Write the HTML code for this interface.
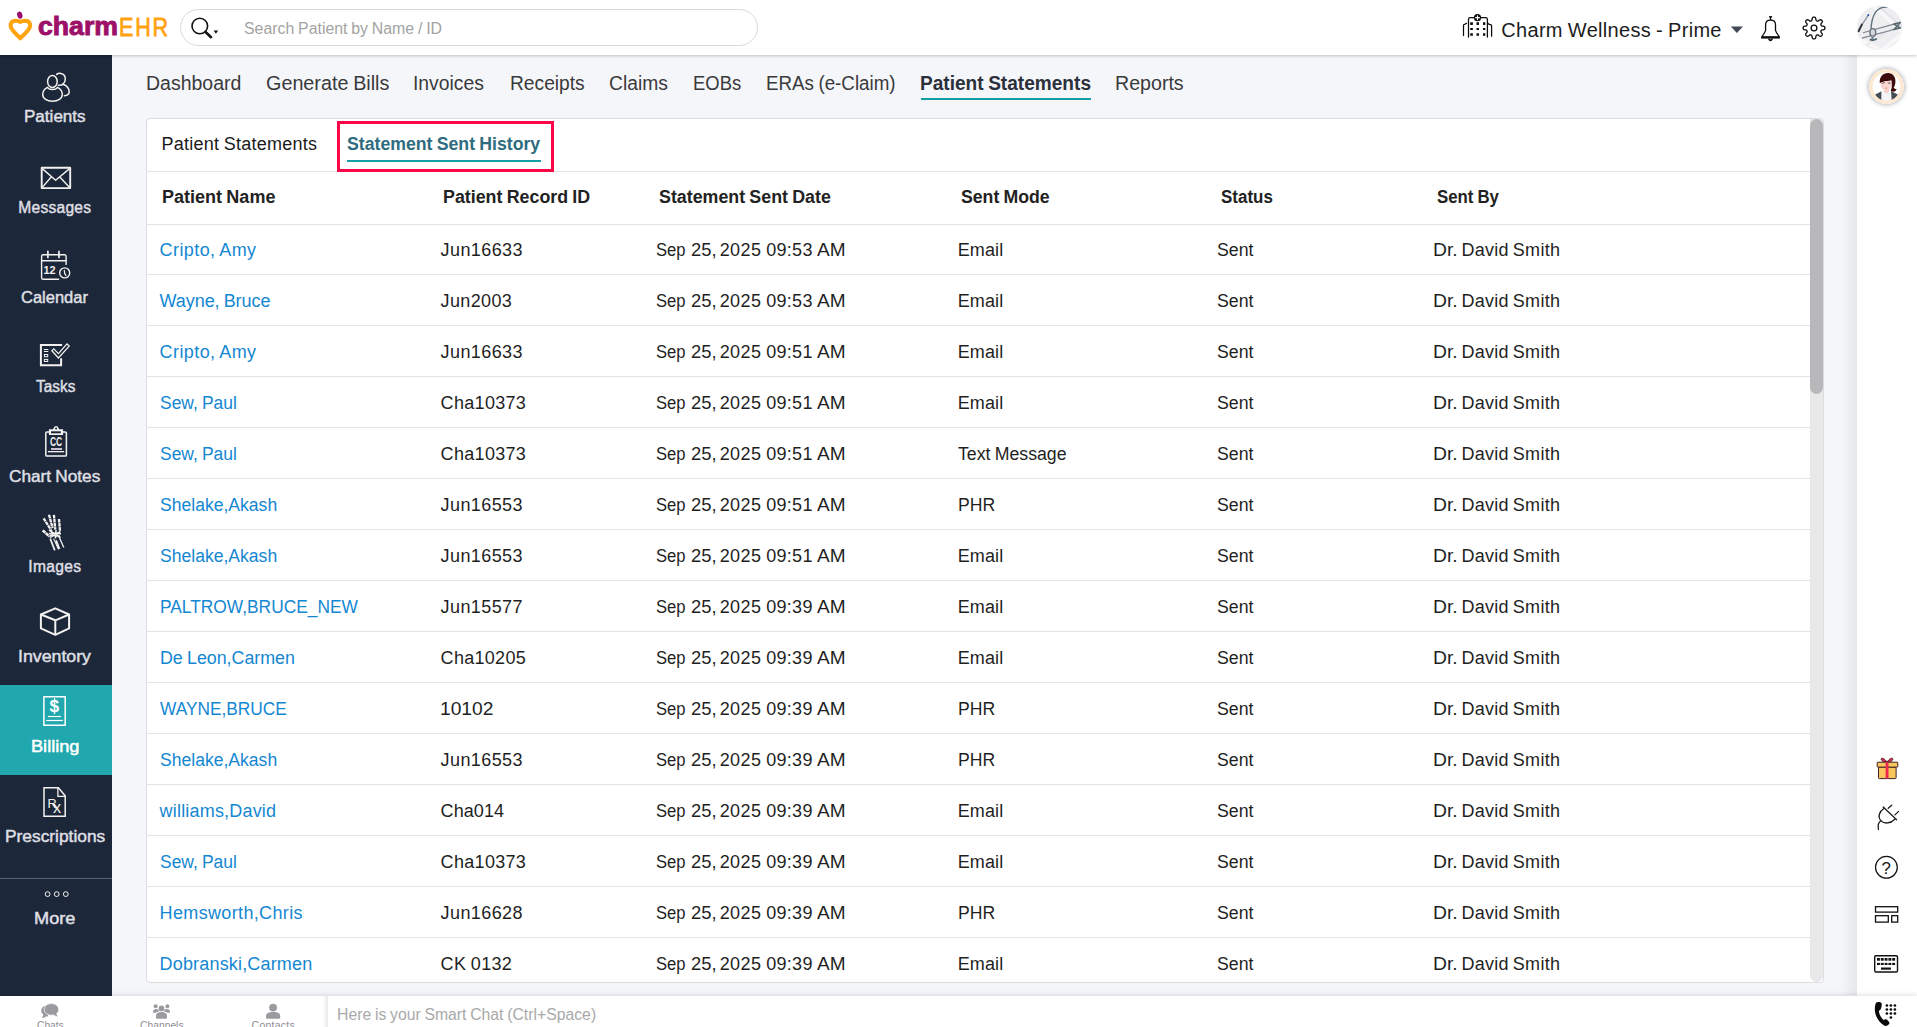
<!DOCTYPE html><html lang="en"><head><meta charset="utf-8"><title>Statement Sent History</title><style>
html,body{margin:0;padding:0;}
html{width:1917px;height:1027px;overflow:hidden;}
body{width:1917px;height:1027px;overflow:hidden;position:relative;background:#f5f6fa;font-family:"Liberation Sans",sans-serif;}
.t{position:absolute;white-space:pre;line-height:1;word-spacing:-0.04em;font-family:"Liberation Sans",sans-serif;}
.t,.p{transform-origin:0 50%;}
.p{display:inline-block;}
.abs{position:absolute;}
#app{position:absolute;left:0;top:0;width:1917px;height:1027px;overflow:hidden;}
#header{left:0;top:0;width:1917px;height:55px;background:#fff;box-shadow:0 1px 3px rgba(0,0,0,0.22);z-index:5;}
#sidebar{left:0;top:55px;width:112px;height:940.500px;background:#1c2739;z-index:3;}
#billing{left:0;top:685px;width:112px;height:90px;background:#20a8ae;z-index:4;}
#sbdiv{left:0;top:878px;width:112px;height:1px;background:#596170;z-index:4;}
#search{left:180px;top:9px;width:576px;height:35px;border:1px solid #d9d9d9;border-radius:19px;background:#fff;}
#card{left:146px;top:118px;width:1676px;height:863px;background:#fff;border:1px solid #dcdde1;border-radius:4px;overflow:hidden;}
.rl{position:absolute;left:0;width:1663px;height:1px;background:#e4e4e6;}
#track{left:1663px;top:0;width:13px;height:863px;background:#e8e8e8;border-radius:0 0 6.500px 6.500px;}
#thumb{left:1663px;top:0;width:13px;height:275px;background:#b8b8ba;border-radius:6.5px;}
#pink{left:337px;top:121px;width:211px;height:45px;border:3px solid #fb0648;}
#navul{left:921px;top:98.400px;width:170px;height:2.100px;background:#12a0a5;}
#subul{left:347px;top:160px;width:194px;height:2px;background:#12a0a5;}
#rshadow{left:1841px;top:55px;width:16px;height:940px;background:linear-gradient(to right,rgba(245,246,250,0),#e6e7ea);}
#rpanel{left:1857px;top:55px;width:60px;height:972px;background:#fff;}
#bottom{left:0;top:995.500px;width:1917px;height:32px;background:#fff;box-shadow:0 -1px 5px rgba(0,0,0,0.13);z-index:2;}
#bdiv{left:323px;top:996px;width:5px;height:31px;background:linear-gradient(to right,#fff,#e9e9ec);z-index:3;}
#av1{left:1857px;top:5.500px;width:44.600px;height:44.600px;border-radius:50%;overflow:hidden;background:#e8eaed;}
#av2{left:1869px;top:69px;width:35px;height:35px;border-radius:50%;overflow:hidden;background:#fff;box-shadow:0 0 4px 1px rgba(90,95,110,0.45);}
</style></head><body><div id="app">
<div class="abs" id="sidebar"></div><div class="abs" id="billing"></div><div class="abs" id="sbdiv"></div>
<div class="abs" id="rshadow"></div><div class="abs" id="rpanel"></div>
<div class="abs" id="card">
<div class="rl" style="top:52px"></div>
<div class="rl" style="top:105px"></div>
<div class="rl" style="top:155px"></div>
<div class="rl" style="top:206px"></div>
<div class="rl" style="top:257px"></div>
<div class="rl" style="top:308px"></div>
<div class="rl" style="top:359px"></div>
<div class="rl" style="top:410px"></div>
<div class="rl" style="top:461px"></div>
<div class="rl" style="top:512px"></div>
<div class="rl" style="top:563px"></div>
<div class="rl" style="top:614px"></div>
<div class="rl" style="top:665px"></div>
<div class="rl" style="top:716px"></div>
<div class="rl" style="top:767px"></div>
<div class="rl" style="top:818px"></div>
<div class="rl" style="top:869px"></div>
<div class="abs" id="track"></div><div class="abs" id="thumb"></div>
</div>
<div class="abs" id="pink"></div><div class="abs" id="navul"></div><div class="abs" id="subul"></div>
<div class="abs" id="bottom"></div><div class="abs" id="bdiv"></div>
<div class="abs" id="header"></div><div class="abs" id="search" style="z-index:6"></div>
<div class="abs" id="av1" style="z-index:7"><svg width="45" height="45" viewBox="0 0 45 45"><rect width="45" height="45" fill="#eeeef0"/><g stroke="#f8f8f9" stroke-width="3.5"><path d="M14 -2 L50 30"/><path d="M-4 30 L40 52"/><path d="M20 48 L50 24"/></g><g stroke="#e1e2e5" stroke-width="1.2"><path d="M24 2 L46 22"/><path d="M8 40 L36 22"/></g><path d="M11.600 8.600 L4.600 19.400" stroke="#8d93a3" stroke-width="1.300"/><path d="M4.800 18.600 L1.600 25.200" stroke="#2f333b" stroke-width="2" stroke-linecap="round"/><path d="M11.700 8.200 L11 10" stroke="#1d3fae" stroke-width="1.500"/><path d="M14 24.500 C14.200 17 15.200 11 18.600 6.200 C21.600 2 25.600 0.800 30.600 1.200" stroke="#587079" stroke-width="1.350" fill="none"/><g stroke="#7c8290" stroke-width="1.100" fill="none"><path d="M6 26.700 L36 18.400"/><path d="M4.900 32.100 L36 23.700"/></g><g stroke="#5d6c73" stroke-width="1.700" fill="none"><path d="M36 18.400 L44 16.200"/><path d="M36 23.700 L44 21.600"/><path d="M37 18 L43 22 M37 23.500 L43 17"/></g><ellipse cx="15.800" cy="26.400" rx="2.900" ry="3.800" fill="#d5d7dc" stroke="#67707e" stroke-width="1.400"/><path d="M12.800 33.400 C15 34.400 18 34 19.800 32.600" stroke="#46616a" stroke-width="1.800" fill="none"/><path d="M15.600 30 V33" stroke="#7d8594" stroke-width="2.400"/></svg></div>
<div class="abs" id="av2" style="z-index:7"><svg width="35" height="35" viewBox="0 0 35 35"><circle cx="17.500" cy="17.500" r="15.700" fill="#fff" stroke="#fde9d2" stroke-width="3.600"/><path d="M6.200 25.400 L12.600 22.200 L12.600 30.800 C10 29.800 7.800 27.900 6.200 25.400 Z" fill="#464c55"/><path d="M22 22.200 L28.800 25.400 C27.200 27.900 25 29.800 22.400 30.800 Z" fill="#464c55"/><path d="M12.600 22.600 L17.300 24.200 L22 22.600 L22.400 30.800 C19.200 32 15.800 32 12.600 30.800 Z" fill="#f4f5f7"/><path d="M14.800 19 H20 V23 L17.400 24.400 L14.800 23 Z" fill="#f7cfcb"/><ellipse cx="17" cy="14.600" rx="5.600" ry="6.400" fill="#f9d6d1"/><path d="M10.800 14.200 C10.200 8 14 4 19 4 C24 4 26.800 8 26.400 13 C26.200 15.400 25.600 17.400 24.600 18.800 C25.800 20 26.800 20.200 27.600 20 C27 22.400 24.600 23.400 21.600 22 C23 19 23.200 15.600 22.400 11.200 C19.600 12.200 14.400 11.600 11.600 13.800 Z" fill="#3c0a0a"/><path d="M13 14.400 l2.600 -0.800 M18.800 13.800 l2.600 0.600" stroke="#3a4a55" stroke-width="0.900"/><path d="M16 19.200 h2.200" stroke="#d8894e" stroke-width="0.800"/></svg></div>

<div id="icons" style="position:absolute;left:0;top:0;z-index:7"><svg style="position:absolute;left:4px;top:6px;" width="36" height="40" viewBox="0 0 36 40" fill="none"><path d="M16.300 16 C14.900 14.900 13 14.750 11.200 14.750 C8.200 14.750 6.600 17 6.600 19.600 C6.600 24.400 12.900 28.400 16.350 32.300 C19.800 28.400 26.100 24.400 26.100 19.600 C26.100 17 24.500 14.750 21.500 14.750 C19.700 14.750 17.700 14.900 16.300 16 Z" stroke="#ffa30f" stroke-width="4.100" stroke-linejoin="round"/><ellipse cx="15.800" cy="9.200" rx="2.600" ry="3.600" fill="#9c0a6c" transform="rotate(-14 15.800 9.200)"/></svg><svg style="position:absolute;left:188px;top:14px;" width="34" height="28" viewBox="0 0 34 28" fill="none"><circle cx="11.8" cy="12" r="7.8" stroke="#111" stroke-width="1.6"/><path d="M17.6 18 L23 23.2" stroke="#111" stroke-width="2.6" stroke-linecap="round"/><path d="M25.6 16.6 h4.6 l-2.3 3.2z" fill="#111"/></svg><svg style="position:absolute;left:1455px;top:6px;" width="45" height="40" viewBox="0 0 45 40" fill="none"><g stroke="#0c0c0c" stroke-width="1.25" stroke-linecap="round" stroke-linejoin="round"><path d="M13.5 31 V13.400 Q13.500 11.700 15.200 11.700 H30.700 Q32.400 11.700 32.400 13.400 V31"/><path d="M8.500 29.600 V19.300 Q8.500 18.300 9.500 18.300 Q10.600 18.200 11.600 17.300"/><path d="M36.600 30.200 V20 Q36.600 18.700 35.300 18.600 Q34 18.500 33.100 17.500"/></g><circle cx="22.500" cy="11.700" r="3.600" fill="#0c0c0c"/><path d="M22.500 9.800 V13.600 M20.600 11.700 H24.400" stroke="#fff" stroke-width="1.200" stroke-linecap="round"/><g fill="#0c0c0c"><rect x="15.2" y="16.2" width="2.7" height="2.7" rx="0.3"/><rect x="15.2" y="22" width="2.7" height="2.1" rx="0.3"/><rect x="15.2" y="27.3" width="2.7" height="2.5" rx="0.3"/><rect x="21.5" y="16.2" width="2.5" height="2.7" rx="0.3"/><rect x="21.5" y="22" width="2.5" height="2.1" rx="0.3"/><rect x="21.5" y="27.3" width="2.5" height="2.5" rx="0.3"/><rect x="28" y="16.2" width="2.3" height="2.7" rx="0.3"/><rect x="28" y="22" width="2.3" height="2.1" rx="0.3"/><rect x="28" y="27.3" width="2.3" height="2.5" rx="0.3"/></g></svg><svg style="position:absolute;left:1730px;top:26px;" width="14" height="8" viewBox="0 0 14 8" fill="none"><path d="M0.8 0.4 H13 L6.9 7 Z" fill="#444a55"/></svg><svg style="position:absolute;left:1750px;top:6px;" width="40" height="40" viewBox="0 0 40 40" fill="none"><g stroke="#0c0c0c" stroke-width="1.300" stroke-linejoin="round" stroke-linecap="butt"><path d="M19 10.800 H22.100" stroke-width="1.400"/><path d="M20.550 11 V14"/><path d="M11.700 31 C13.400 28.400 15 26.400 15.600 24.400 V18.800 C15.600 15.800 17.600 14.200 20.550 14.200 C23.500 14.200 25.500 15.800 25.500 18.800 V24.400 C26.100 26.400 27.700 28.400 29.400 31 Z"/><path d="M11.200 31.650 H29.900" stroke-width="1.900"/><path d="M18.700 32.600 Q20.500 36.200 22.300 32.600" stroke-width="1.600"/></g></svg><svg style="position:absolute;left:1794.05px;top:7.85px;" width="40" height="40" viewBox="0 0 40 40" fill="none"><path d="M20.00 9.10 L20.43 9.13 L20.85 9.22 L21.25 9.46 L21.58 9.99 L21.80 10.93 L21.95 11.86 L22.14 12.41 L22.38 12.69 L22.64 12.85 L22.91 12.98 L23.19 13.08 L23.49 13.15 L23.85 13.12 L24.37 12.86 L25.14 12.31 L25.95 11.80 L26.57 11.66 L27.02 11.78 L27.39 12.01 L27.71 12.29 L27.99 12.61 L28.22 12.98 L28.34 13.43 L28.20 14.05 L27.69 14.86 L27.14 15.63 L26.88 16.15 L26.85 16.51 L26.92 16.81 L27.02 17.09 L27.15 17.36 L27.31 17.62 L27.59 17.86 L28.14 18.05 L29.07 18.20 L30.01 18.42 L30.54 18.75 L30.78 19.15 L30.87 19.57 L30.90 20.00 L30.87 20.43 L30.78 20.85 L30.54 21.25 L30.01 21.58 L29.07 21.80 L28.14 21.95 L27.59 22.14 L27.31 22.38 L27.15 22.64 L27.02 22.91 L26.92 23.19 L26.85 23.49 L26.88 23.85 L27.14 24.37 L27.69 25.14 L28.20 25.95 L28.34 26.57 L28.22 27.02 L27.99 27.39 L27.71 27.71 L27.39 27.99 L27.02 28.22 L26.57 28.34 L25.95 28.20 L25.14 27.69 L24.37 27.14 L23.85 26.88 L23.49 26.85 L23.19 26.92 L22.91 27.02 L22.64 27.15 L22.38 27.31 L22.14 27.59 L21.95 28.14 L21.80 29.07 L21.58 30.01 L21.25 30.54 L20.85 30.78 L20.43 30.87 L20.00 30.90 L19.57 30.87 L19.15 30.78 L18.75 30.54 L18.42 30.01 L18.20 29.07 L18.05 28.14 L17.86 27.59 L17.62 27.31 L17.36 27.15 L17.09 27.02 L16.81 26.92 L16.51 26.85 L16.15 26.88 L15.63 27.14 L14.86 27.69 L14.05 28.20 L13.43 28.34 L12.98 28.22 L12.61 27.99 L12.29 27.71 L12.01 27.39 L11.78 27.02 L11.66 26.57 L11.80 25.95 L12.31 25.14 L12.86 24.37 L13.12 23.85 L13.15 23.49 L13.08 23.19 L12.98 22.91 L12.85 22.64 L12.69 22.38 L12.41 22.14 L11.86 21.95 L10.93 21.80 L9.99 21.58 L9.46 21.25 L9.22 20.85 L9.13 20.43 L9.10 20.00 L9.13 19.57 L9.22 19.15 L9.46 18.75 L9.99 18.42 L10.93 18.20 L11.86 18.05 L12.41 17.86 L12.69 17.62 L12.85 17.36 L12.98 17.09 L13.08 16.81 L13.15 16.51 L13.12 16.15 L12.86 15.63 L12.31 14.86 L11.80 14.05 L11.66 13.43 L11.78 12.98 L12.01 12.61 L12.29 12.29 L12.61 12.01 L12.98 11.78 L13.43 11.66 L14.05 11.80 L14.86 12.31 L15.63 12.86 L16.15 13.12 L16.51 13.15 L16.81 13.08 L17.09 12.98 L17.36 12.85 L17.62 12.69 L17.86 12.41 L18.05 11.86 L18.20 10.93 L18.42 9.99 L18.75 9.46 L19.15 9.22 L19.57 9.13Z" stroke="#0c0c0c" stroke-width="1.300" stroke-linejoin="round"/><circle cx="20" cy="20" r="2.900" stroke="#0c0c0c" stroke-width="1.250"/></svg><svg style="position:absolute;left:30px;top:66px;" width="52" height="40" viewBox="0 0 52 40" fill="none"><g stroke="#f3f2f0" stroke-width="1.5" stroke-linecap="round" stroke-linejoin="round"><ellipse cx="22.4" cy="15.5" rx="4.8" ry="6"/><path d="M17.4 21.4 C14.4 23 12.7 25.6 12.7 28.6 C12.7 32.6 17 35.3 22.5 35.3 C28 35.3 32.3 32.6 32.3 28.6 C32.3 25.6 30.6 23 27.6 21.4 C25.6 24.3 19.4 24.3 17.4 21.4 Z"/><path d="M26.6 8.4 C28 7.3 29.4 7.2 30.8 7.4 C33.6 7.8 35.3 10.2 35.3 13 C35.3 15.2 34.4 17 32.9 18.2"/><path d="M28.3 19.2 C30.2 19.6 32 19.2 33.2 18.2 C36.8 19.8 39.2 22.6 39.2 25.8 C39.2 28.4 37 29.6 34.4 29.8"/></g></svg><svg style="position:absolute;left:30px;top:156px;" width="52" height="40" viewBox="0 0 52 40" fill="none"><g stroke="#f3f2f0" stroke-linejoin="round"><rect x="11.7" y="11.8" width="28.5" height="20.3" stroke-width="1.9"/><path d="M12.3 12.6 L25.6 24.2 L39.6 12.6 M12.3 31.4 L21.2 21 M39.6 31.4 L29.8 21" stroke-width="1.4"/></g></svg><svg style="position:absolute;left:30px;top:244px;" width="52" height="40" viewBox="0 0 52 40" fill="none"><g stroke="#f3f2f0" stroke-width="1.4" stroke-linecap="round" stroke-linejoin="round"><path d="M28.6 35.3 H13.2 Q11.6 35.3 11.6 33.7 V12.4 Q11.6 10.8 13.2 10.8 H34.5 Q36.1 10.8 36.1 12.4 V20.4"/><path d="M11.6 16.7 H36.1"/><path d="M17.9 7.4 V13.4 M29 7.4 V13.4" stroke-width="1.700"/><circle cx="34.7" cy="28.9" r="5"/><path d="M34.3 26.3 L34.7 29.6 L35.9 31.4" stroke-width="1.2"/></g><text x="13.6" y="30" font-family="Liberation Sans, sans-serif" font-weight="700" font-size="11.2" fill="#f3f2f0" textLength="12" lengthAdjust="spacingAndGlyphs">12</text></svg><svg style="position:absolute;left:30px;top:334px;" width="52" height="40" viewBox="0 0 52 40" fill="none"><g stroke="#f3f2f0" stroke-linejoin="miter"><path d="M32.1 10.9 H10.9 V31.3 H31.1 V24.2" stroke-width="2"/><rect x="14.4" y="15.5" width="3.3" height="2" stroke-width="1"/><rect x="14.4" y="20.5" width="3.3" height="2.2" stroke-width="1"/><rect x="14.4" y="25.4" width="3.3" height="2.1" stroke-width="1"/><path d="M21.9 16.8 L23.8 14.9 L28.4 19.6 L37 9.9 L39.2 12.1 L28.4 24 Z" stroke-width="1.3"/></g></svg><svg style="position:absolute;left:30px;top:420px;" width="52" height="40" viewBox="0 0 52 40" fill="none"><g stroke="#f3f2f0" stroke-linejoin="round"><rect x="15.8" y="11.9" width="20.6" height="24.2" rx="1.2" stroke-width="1.5"/></g><path d="M18.9 15 V9.2 H23 L24.6 6.6 Q26.1 5.2 27.6 6.6 L29.2 9.2 H33.1 V15 Z" fill="#f3f2f0"/><rect x="21" y="11.3" width="9.8" height="2" fill="#1c2739"/><circle cx="26.1" cy="8.6" r="1" fill="#1c2739"/><text x="19.9" y="25.9" font-family="Liberation Sans, sans-serif" font-weight="700" font-size="12.2" fill="#f3f2f0" textLength="12.3" lengthAdjust="spacingAndGlyphs">CC</text><rect x="21" y="28" width="11.1" height="2" fill="#c9c3cf"/><rect x="17.9" y="31" width="16.2" height="1.3" fill="#f3f2f0"/></svg><svg style="position:absolute;left:30px;top:510px;" width="52" height="46" viewBox="0 0 52 46" fill="none"><g stroke="#f3f2f0" stroke-width="2.300" stroke-linecap="butt" stroke-dasharray="3.600 0.500"><path d="M13.600 8.400 L20.800 19.400"/><path d="M19 4.800 L22.600 18"/><path d="M23.900 4.800 L25.300 19.600"/><path d="M29 9 L30 21"/><path d="M12.700 20.400 L19.600 26.600" stroke-width="2.600"/></g><g stroke="#f3f2f0" stroke-width="1.500"><path d="M19 20 L30.500 27.500 M30.500 21.500 L20 27.500 M21.500 19.500 L22.500 26.500 M26 20 L25.500 28.500 M19 23.500 L31 23.800 M20 25.500 L30 26"/></g><g stroke="#f3f2f0" stroke-width="1.700"><path d="M20.200 28.600 L24.800 40.400"/><path d="M26 30.400 L29.400 39" stroke-width="2"/><path d="M28.800 26.200 L33.800 37.600" stroke-width="1.300"/><path d="M23.600 28.600 L28.400 39.400" stroke-width="1.100"/></g></svg><svg style="position:absolute;left:30px;top:600px;" width="52" height="40" viewBox="0 0 52 40" fill="none"><g stroke="#f3f2f0" stroke-width="2" stroke-linejoin="round"><path d="M25.3 8.3 L39.1 14.5 V28.4 L25.3 34.8 L10.9 28.4 V14.5 Z"/><path d="M10.9 14.5 L25.3 20.3 L39.1 14.5 M25.3 20.3 V34.8"/></g></svg><svg style="position:absolute;left:30px;top:688px;" width="52" height="40" viewBox="0 0 52 40" fill="none"><g stroke="#fff"><rect x="13.9" y="8.650" width="21.3" height="28.5" stroke-width="1.500" stroke-linejoin="round"/><path d="M24.550 10.200 V25.800" stroke-width="1.300"/></g><text x="19.6" y="24.2" font-family="Liberation Sans, sans-serif" font-weight="700" font-size="16.5" fill="#fff" textLength="9.6" lengthAdjust="spacingAndGlyphs">$</text><rect x="17.9" y="27.9" width="13.1" height="1.2" fill="#fff"/><rect x="16.2" y="31.9" width="16.7" height="1.2" fill="#fff"/></svg><svg style="position:absolute;left:30px;top:780px;" width="52" height="40" viewBox="0 0 52 40" fill="none"><g stroke="#f3f2f0" stroke-width="1.5" stroke-linejoin="miter"><path d="M28.4 7.7 H14 V36.2 H35.2 V15.8 Z"/><path d="M27.9 7.9 V16.3 H35" stroke-width="1.3"/><path d="M22.600 24.300 L26.500 28.600" stroke-width="1.250"/></g><text x="17.4" y="27.9" font-family="Liberation Sans, sans-serif" font-size="12.6" fill="#f3f2f0">R</text><text x="22.900" y="33.400" font-family="Liberation Sans, sans-serif" font-size="16.200" fill="#f3f2f0">x</text></svg><svg style="position:absolute;left:40px;top:886px;" width="36" height="16" viewBox="0 0 36 16" fill="none"><g stroke="#f3f2f0" stroke-width="1"><circle cx="7.6" cy="8.1" r="2.4"/><circle cx="16.7" cy="8.1" r="2.4"/><circle cx="25.8" cy="8.1" r="2.4"/></g></svg><svg style="position:absolute;left:1860px;top:750px;" width="52" height="40" viewBox="0 0 52 40" fill="none"><g stroke="#3c1f24" stroke-width="1" stroke-linejoin="round"><path d="M27 12.2 C25 9 22.4 7.6 21.4 8.6 C20.4 9.8 22.4 11.8 27 12.4 C31.600 11.8 33.600 9.8 32.600 8.600 C31.600 7.600 29 9 27 12.200 Z" fill="#f0284f"/><rect x="18.5" y="17" width="17.6" height="11.6" rx="0.8" fill="#fbc55e"/><rect x="17.2" y="12.2" width="20.6" height="4.9" rx="0.6" fill="#fbc55e"/></g><rect x="25.6" y="12.2" width="2.9" height="16.4" fill="#f0284f"/></svg><svg style="position:absolute;left:1860px;top:800px;" width="52" height="40" viewBox="0 0 52 40" fill="none"><g stroke="#1e1e1e" stroke-width="1.3" stroke-linecap="round"><path d="M23.2 7 L36.6 19.700"/><path d="M28.2 8.300 L31.700 5.200 M34.900 14.900 L38.600 11.400"/><path d="M24.200 8.2 C19 11.5 17.600 17 20.800 20.600 C24.200 24.200 30.500 23.800 34.800 19.200"/><path d="M20.900 20.800 C18.600 22.200 17.600 24.600 18.400 29.300"/></g></svg><svg style="position:absolute;left:1860px;top:845px;" width="52" height="40" viewBox="0 0 52 40" fill="none"><circle cx="26.4" cy="22.3" r="10.9" stroke="#111" stroke-width="1.2"/><text x="21.6" y="28.9" font-family="Liberation Sans, sans-serif" font-size="16.8" fill="#111">?</text></svg><svg style="position:absolute;left:1860px;top:895px;" width="52" height="40" viewBox="0 0 52 40" fill="none"><g stroke="#111" stroke-width="1.3"><rect x="15.5" y="11.700" width="22.2" height="5.400"/><rect x="15.5" y="20.700" width="12.8" height="6.400"/><rect x="31.700" y="20.700" width="6" height="6.400"/></g></svg><svg style="position:absolute;left:1860px;top:940px;" width="52" height="40" viewBox="0 0 52 40" fill="none"><rect x="14.700" y="15.800" width="22.800" height="16.200" rx="1.2" stroke="#111" stroke-width="1.4"/><rect x="17.0" y="18" width="2.900" height="2.700" fill="#111"/><rect x="17.0" y="22.900" width="2.900" height="2.100" fill="#111"/><rect x="20.8" y="18" width="2.900" height="2.700" fill="#111"/><rect x="20.8" y="22.900" width="2.900" height="2.100" fill="#111"/><rect x="24.6" y="18" width="2.900" height="2.700" fill="#111"/><rect x="24.6" y="22.900" width="2.900" height="2.100" fill="#111"/><rect x="28.4" y="18" width="2.900" height="2.700" fill="#111"/><rect x="28.4" y="22.900" width="2.900" height="2.100" fill="#111"/><rect x="32.2" y="18" width="2.900" height="2.700" fill="#111"/><rect x="32.2" y="22.900" width="2.900" height="2.100" fill="#111"/><rect x="21" y="27.500" width="9.900" height="2.200" fill="#111"/></svg><svg style="position:absolute;left:1860px;top:995px;" width="52" height="32" viewBox="0 0 52 32" fill="none"><path d="M16.200 7.600 C17.600 6.600 20.600 7 21.700 8.200 C21.900 10.600 21.400 13 20.400 14.700 C19.400 15.300 18.900 15.800 18.900 16.600 C19.400 20 21.400 23.200 23.600 24.900 C24.600 24.300 25.600 23.900 26.400 24.300 C28 25.400 29.100 26.800 29.600 28.300 C28.600 30.300 26.400 31.300 24.600 30.800 C19.600 28.300 15.600 22.300 14.900 15.800 C14.700 12.300 15.100 9.600 16.200 7.600 Z" fill="#0a0a0a"/><circle cx="26.9" cy="10.5" r="1.350" fill="#0a0a0a"/><circle cx="30.9" cy="10.5" r="1.350" fill="#0a0a0a"/><circle cx="34.9" cy="10.5" r="1.350" fill="#0a0a0a"/><circle cx="26.9" cy="14.5" r="1.350" fill="#0a0a0a"/><circle cx="30.9" cy="14.5" r="1.350" fill="#0a0a0a"/><circle cx="34.9" cy="14.5" r="1.350" fill="#0a0a0a"/><circle cx="26.9" cy="18.5" r="1.350" fill="#0a0a0a"/><circle cx="30.9" cy="18.5" r="1.350" fill="#0a0a0a"/><circle cx="34.9" cy="18.5" r="1.350" fill="#0a0a0a"/><circle cx="30.900" cy="22.500" r="1.350" fill="#0a0a0a"/></svg><svg style="position:absolute;left:38px;top:1001px;" width="24" height="20" viewBox="0 0 24 20" fill="none"><path d="M9 4.200 C5.500 4.600 3.200 7 3.200 9.600 C3.200 11.200 4 12.600 5.300 13.600 C5.200 14.900 4.600 16 3.800 16.900 C5.600 16.800 7.200 16.200 8.400 15.200 C9 15.300 9.600 15.400 10.200 15.400" fill="#9b9a9f"/><path d="M13.400 2.600 C9.400 2.600 6.200 5.200 6.200 8.400 C6.200 11.600 9.400 14.200 13.400 14.200 C14.200 14.200 15 14.100 15.700 13.900 C16.800 15 18.400 15.700 20.200 15.800 C19.400 14.800 18.900 13.700 18.800 12.400 C20 11.300 20.700 9.900 20.700 8.400 C20.700 5.200 17.400 2.600 13.400 2.600 Z" fill="#9b9a9f" stroke="#fff" stroke-width="0.700"/></svg><svg style="position:absolute;left:150px;top:1001px;" width="24" height="20" viewBox="0 0 24 20" fill="none"><g fill="#9b9a9f"><circle cx="11.500" cy="7.400" r="2.900"/><path d="M6 16.400 V14.600 C6 12.400 8 11 11.500 11 C15 11 17 12.400 17 14.600 V16.400 Q17 17.700 15.700 17.700 H7.300 Q6 17.700 6 16.400 Z"/><circle cx="5.600" cy="5.200" r="2"/><circle cx="17.400" cy="5.200" r="2"/><path d="M3 11.800 V10.400 C3 8.900 4.200 8 6.200 8 C7.200 8 7.900 8.200 8.300 8.500 C8.500 9.500 8.900 10 9.300 10.400 C7.300 10.700 6 11.200 5.400 11.800 Z"/><path d="M20 11.800 V10.400 C20 8.900 18.800 8 16.800 8 C15.800 8 15.100 8.200 14.700 8.500 C14.500 9.500 14.100 10 13.700 10.400 C15.700 10.700 17 11.200 17.600 11.800 Z"/></g></svg><svg style="position:absolute;left:261px;top:1001px;" width="24" height="20" viewBox="0 0 24 20" fill="none"><g fill="#9b9a9f"><circle cx="12.100" cy="6.600" r="3.900"/><path d="M5 16.200 V14.800 C5 12.400 7.600 11 12.100 11 C16.600 11 19.200 12.400 19.200 14.800 V16.200 Q19.200 17.700 17.700 17.700 H6.500 Q5 17.700 5 16.200 Z"/></g></svg></div>
<div id="texts" style="position:absolute;left:0;top:0;z-index:8">
<span class="t" id="t0" style="left:145.62px;top:73.07px;font-size:20px;font-weight:400;color:#3a3a3a;transform:scaleX(0.9745);">Dashboard</span>
<span class="t" id="t1" style="left:265.51px;top:73.07px;font-size:20px;font-weight:400;color:#3a3a3a;transform:scaleX(0.9886);">Generate Bills</span>
<span class="t" id="t2" style="left:413.43px;top:73.07px;font-size:20px;font-weight:400;color:#3a3a3a;transform:scaleX(0.9667);">Invoices</span>
<span class="t" id="t3" style="left:510.34px;top:73.07px;font-size:20px;font-weight:400;color:#3a3a3a;transform:scaleX(0.9598);">Receipts</span>
<span class="t" id="t4" style="left:608.64px;top:73.07px;font-size:20px;font-weight:400;color:#3a3a3a;transform:scaleX(0.9633);">Claims</span>
<span class="t" id="t5" style="left:693.08px;top:73.07px;font-size:20px;font-weight:400;color:#3a3a3a;transform:scaleX(0.9216);">EOBs</span>
<span class="t" id="t6" style="left:765.66px;top:73.07px;font-size:20px;font-weight:400;color:#3a3a3a;transform:scaleX(0.9382);">ERAs (e-Claim)</span>
<span class="t" id="t7" style="left:1115.47px;top:73.07px;font-size:20px;font-weight:400;color:#3a3a3a;transform:scaleX(0.9804);">Reports</span>
<span class="t" id="t8" style="left:920.35px;top:73.07px;font-size:20px;font-weight:700;color:#2b303b;transform:scaleX(0.9539);">Patient Statements</span>
<span class="t" id="t9" style="left:161.50px;top:134.56px;font-size:18px;font-weight:400;color:#1a1a1a;letter-spacing:0.241px;">Patient Statements</span>
<span class="t" id="t10" style="left:346.60px;top:134.56px;font-size:18px;font-weight:700;color:#2f6c80;transform:scaleX(0.9827);">Statement Sent History</span>
<span class="t" id="t11" style="left:162.00px;top:188.06px;font-size:18px;font-weight:700;color:#222;letter-spacing:0.009px;">Patient Name</span>
<span class="t" id="t12" style="left:442.51px;top:188.06px;font-size:18px;font-weight:700;color:#222;transform:scaleX(0.9905);">Patient Record ID</span>
<span class="t" id="t13" style="left:659.30px;top:188.06px;font-size:18px;font-weight:700;color:#222;transform:scaleX(0.9896);">Statement Sent Date</span>
<span class="t" id="t14" style="left:961.40px;top:188.06px;font-size:18px;font-weight:700;color:#222;transform:scaleX(0.9822);">Sent Mode</span>
<span class="t" id="t15" style="left:1220.50px;top:188.06px;font-size:18px;font-weight:700;color:#222;transform:scaleX(0.9418);">Status</span>
<span class="t" id="t16" style="left:1436.50px;top:188.06px;font-size:18px;font-weight:700;color:#222;transform:scaleX(0.9333);">Sent By</span>
<span class="t" id="t17" style="left:159.60px;top:240.96px;font-size:18px;font-weight:400;color:#1487d2;letter-spacing:0.415px;">Cripto, Amy</span>
<span class="t" id="t18" style="left:440.62px;top:240.96px;font-size:18px;font-weight:400;color:#1f1f1f;letter-spacing:0.407px;">Jun16633</span>
<span class="t" style="left:655.68px;top:240.96px;font-size:18px;font-weight:400;color:#1f1f1f;"><span class="p" id="t19" style="transform:scaleX(0.9240);">Sep </span><span class="p" id="t20" style="transform:scaleX(1.0229);margin-left:-1.49px;">25, </span><span class="p" id="t21" style="letter-spacing:0.400px;margin-left:-0.11px;">2025 </span><span class="p" id="t22" style="letter-spacing:0.312px;margin-left:0.11px;">09:53 </span><span class="p" id="t23" style="transform:scaleX(1.0574);margin-left:0.15px;">AM</span></span>
<span class="t" id="t24" style="left:957.72px;top:240.96px;font-size:18px;font-weight:400;color:#1f1f1f;letter-spacing:0.125px;">Email</span>
<span class="t" id="t25" style="left:1217.39px;top:240.96px;font-size:18px;font-weight:400;color:#1f1f1f;transform:scaleX(0.9847);">Sent</span>
<span class="t" style="left:1433.47px;top:240.96px;font-size:18px;font-weight:400;color:#1f1f1f;"><span class="p" id="t26" style="transform:scaleX(1.0733);">Dr. </span><span class="p" id="t27" style="letter-spacing:0.250px;margin-left:0.85px;">David </span><span class="p" id="t28" style="letter-spacing:0.287px;margin-left:-0.61px;">Smith</span></span>
<span class="t" id="t29" style="left:159.60px;top:291.96px;font-size:18px;font-weight:400;color:#1487d2;letter-spacing:-0.077px;">Wayne, Bruce</span>
<span class="t" id="t30" style="left:440.62px;top:291.96px;font-size:18px;font-weight:400;color:#1f1f1f;letter-spacing:0.367px;">Jun2003</span>
<span class="t" style="left:655.68px;top:291.96px;font-size:18px;font-weight:400;color:#1f1f1f;"><span class="p" id="t31" style="transform:scaleX(0.9240);">Sep </span><span class="p" id="t32" style="transform:scaleX(1.0229);margin-left:-1.49px;">25, </span><span class="p" id="t33" style="letter-spacing:0.400px;margin-left:-0.11px;">2025 </span><span class="p" id="t34" style="letter-spacing:0.312px;margin-left:0.11px;">09:53 </span><span class="p" id="t35" style="transform:scaleX(1.0574);margin-left:0.15px;">AM</span></span>
<span class="t" id="t36" style="left:957.72px;top:291.96px;font-size:18px;font-weight:400;color:#1f1f1f;letter-spacing:0.125px;">Email</span>
<span class="t" id="t37" style="left:1217.39px;top:291.96px;font-size:18px;font-weight:400;color:#1f1f1f;transform:scaleX(0.9847);">Sent</span>
<span class="t" style="left:1433.47px;top:291.96px;font-size:18px;font-weight:400;color:#1f1f1f;"><span class="p" id="t38" style="transform:scaleX(1.0733);">Dr. </span><span class="p" id="t39" style="letter-spacing:0.250px;margin-left:0.85px;">David </span><span class="p" id="t40" style="letter-spacing:0.287px;margin-left:-0.61px;">Smith</span></span>
<span class="t" id="t41" style="left:159.60px;top:342.96px;font-size:18px;font-weight:400;color:#1487d2;letter-spacing:0.415px;">Cripto, Amy</span>
<span class="t" id="t42" style="left:440.62px;top:342.96px;font-size:18px;font-weight:400;color:#1f1f1f;letter-spacing:0.407px;">Jun16633</span>
<span class="t" style="left:655.68px;top:342.96px;font-size:18px;font-weight:400;color:#1f1f1f;"><span class="p" id="t43" style="transform:scaleX(0.9240);">Sep </span><span class="p" id="t44" style="transform:scaleX(1.0229);margin-left:-1.49px;">25, </span><span class="p" id="t45" style="letter-spacing:0.400px;margin-left:-0.11px;">2025 </span><span class="p" id="t46" style="letter-spacing:0.312px;margin-left:0.11px;">09:51 </span><span class="p" id="t47" style="transform:scaleX(1.0574);margin-left:0.15px;">AM</span></span>
<span class="t" id="t48" style="left:957.72px;top:342.96px;font-size:18px;font-weight:400;color:#1f1f1f;letter-spacing:0.125px;">Email</span>
<span class="t" id="t49" style="left:1217.39px;top:342.96px;font-size:18px;font-weight:400;color:#1f1f1f;transform:scaleX(0.9847);">Sent</span>
<span class="t" style="left:1433.47px;top:342.96px;font-size:18px;font-weight:400;color:#1f1f1f;"><span class="p" id="t50" style="transform:scaleX(1.0733);">Dr. </span><span class="p" id="t51" style="letter-spacing:0.250px;margin-left:0.85px;">David </span><span class="p" id="t52" style="letter-spacing:0.287px;margin-left:-0.61px;">Smith</span></span>
<span class="t" id="t53" style="left:159.60px;top:393.96px;font-size:18px;font-weight:400;color:#1487d2;transform:scaleX(0.9688);">Sew, Paul</span>
<span class="t" id="t54" style="left:440.62px;top:393.96px;font-size:18px;font-weight:400;color:#1f1f1f;letter-spacing:0.314px;">Cha10373</span>
<span class="t" style="left:655.68px;top:393.96px;font-size:18px;font-weight:400;color:#1f1f1f;"><span class="p" id="t55" style="transform:scaleX(0.9240);">Sep </span><span class="p" id="t56" style="transform:scaleX(1.0229);margin-left:-1.49px;">25, </span><span class="p" id="t57" style="letter-spacing:0.400px;margin-left:-0.11px;">2025 </span><span class="p" id="t58" style="letter-spacing:0.312px;margin-left:0.11px;">09:51 </span><span class="p" id="t59" style="transform:scaleX(1.0574);margin-left:0.15px;">AM</span></span>
<span class="t" id="t60" style="left:957.72px;top:393.96px;font-size:18px;font-weight:400;color:#1f1f1f;letter-spacing:0.125px;">Email</span>
<span class="t" id="t61" style="left:1217.39px;top:393.96px;font-size:18px;font-weight:400;color:#1f1f1f;transform:scaleX(0.9847);">Sent</span>
<span class="t" style="left:1433.47px;top:393.96px;font-size:18px;font-weight:400;color:#1f1f1f;"><span class="p" id="t62" style="transform:scaleX(1.0733);">Dr. </span><span class="p" id="t63" style="letter-spacing:0.250px;margin-left:0.85px;">David </span><span class="p" id="t64" style="letter-spacing:0.287px;margin-left:-0.61px;">Smith</span></span>
<span class="t" id="t65" style="left:159.60px;top:444.96px;font-size:18px;font-weight:400;color:#1487d2;transform:scaleX(0.9688);">Sew, Paul</span>
<span class="t" id="t66" style="left:440.62px;top:444.96px;font-size:18px;font-weight:400;color:#1f1f1f;letter-spacing:0.314px;">Cha10373</span>
<span class="t" style="left:655.68px;top:444.96px;font-size:18px;font-weight:400;color:#1f1f1f;"><span class="p" id="t67" style="transform:scaleX(0.9240);">Sep </span><span class="p" id="t68" style="transform:scaleX(1.0229);margin-left:-1.49px;">25, </span><span class="p" id="t69" style="letter-spacing:0.400px;margin-left:-0.11px;">2025 </span><span class="p" id="t70" style="letter-spacing:0.312px;margin-left:0.11px;">09:51 </span><span class="p" id="t71" style="transform:scaleX(1.0574);margin-left:0.15px;">AM</span></span>
<span class="t" id="t72" style="left:957.72px;top:444.96px;font-size:18px;font-weight:400;color:#1f1f1f;transform:scaleX(0.9841);">Text Message</span>
<span class="t" id="t73" style="left:1217.39px;top:444.96px;font-size:18px;font-weight:400;color:#1f1f1f;transform:scaleX(0.9847);">Sent</span>
<span class="t" style="left:1433.47px;top:444.96px;font-size:18px;font-weight:400;color:#1f1f1f;"><span class="p" id="t74" style="transform:scaleX(1.0733);">Dr. </span><span class="p" id="t75" style="letter-spacing:0.250px;margin-left:0.85px;">David </span><span class="p" id="t76" style="letter-spacing:0.287px;margin-left:-0.61px;">Smith</span></span>
<span class="t" id="t77" style="left:159.60px;top:495.96px;font-size:18px;font-weight:400;color:#1487d2;transform:scaleX(0.9758);">Shelake,Akash</span>
<span class="t" id="t78" style="left:440.62px;top:495.96px;font-size:18px;font-weight:400;color:#1f1f1f;letter-spacing:0.407px;">Jun16553</span>
<span class="t" style="left:655.68px;top:495.96px;font-size:18px;font-weight:400;color:#1f1f1f;"><span class="p" id="t79" style="transform:scaleX(0.9240);">Sep </span><span class="p" id="t80" style="transform:scaleX(1.0229);margin-left:-1.49px;">25, </span><span class="p" id="t81" style="letter-spacing:0.400px;margin-left:-0.11px;">2025 </span><span class="p" id="t82" style="letter-spacing:0.312px;margin-left:0.11px;">09:51 </span><span class="p" id="t83" style="transform:scaleX(1.0574);margin-left:0.15px;">AM</span></span>
<span class="t" id="t84" style="left:957.72px;top:495.96px;font-size:18px;font-weight:400;color:#1f1f1f;transform:scaleX(0.9779);">PHR</span>
<span class="t" id="t85" style="left:1217.39px;top:495.96px;font-size:18px;font-weight:400;color:#1f1f1f;transform:scaleX(0.9847);">Sent</span>
<span class="t" style="left:1433.47px;top:495.96px;font-size:18px;font-weight:400;color:#1f1f1f;"><span class="p" id="t86" style="transform:scaleX(1.0733);">Dr. </span><span class="p" id="t87" style="letter-spacing:0.250px;margin-left:0.85px;">David </span><span class="p" id="t88" style="letter-spacing:0.287px;margin-left:-0.61px;">Smith</span></span>
<span class="t" id="t89" style="left:159.60px;top:546.96px;font-size:18px;font-weight:400;color:#1487d2;transform:scaleX(0.9758);">Shelake,Akash</span>
<span class="t" id="t90" style="left:440.62px;top:546.96px;font-size:18px;font-weight:400;color:#1f1f1f;letter-spacing:0.407px;">Jun16553</span>
<span class="t" style="left:655.68px;top:546.96px;font-size:18px;font-weight:400;color:#1f1f1f;"><span class="p" id="t91" style="transform:scaleX(0.9240);">Sep </span><span class="p" id="t92" style="transform:scaleX(1.0229);margin-left:-1.49px;">25, </span><span class="p" id="t93" style="letter-spacing:0.400px;margin-left:-0.11px;">2025 </span><span class="p" id="t94" style="letter-spacing:0.312px;margin-left:0.11px;">09:51 </span><span class="p" id="t95" style="transform:scaleX(1.0574);margin-left:0.15px;">AM</span></span>
<span class="t" id="t96" style="left:957.72px;top:546.96px;font-size:18px;font-weight:400;color:#1f1f1f;letter-spacing:0.125px;">Email</span>
<span class="t" id="t97" style="left:1217.39px;top:546.96px;font-size:18px;font-weight:400;color:#1f1f1f;transform:scaleX(0.9847);">Sent</span>
<span class="t" style="left:1433.47px;top:546.96px;font-size:18px;font-weight:400;color:#1f1f1f;"><span class="p" id="t98" style="transform:scaleX(1.0733);">Dr. </span><span class="p" id="t99" style="letter-spacing:0.250px;margin-left:0.85px;">David </span><span class="p" id="t100" style="letter-spacing:0.287px;margin-left:-0.61px;">Smith</span></span>
<span class="t" id="t101" style="left:159.60px;top:597.96px;font-size:18px;font-weight:400;color:#1487d2;transform:scaleX(0.9635);">PALTROW,BRUCE_NEW</span>
<span class="t" id="t102" style="left:440.62px;top:597.96px;font-size:18px;font-weight:400;color:#1f1f1f;letter-spacing:0.407px;">Jun15577</span>
<span class="t" style="left:655.68px;top:597.96px;font-size:18px;font-weight:400;color:#1f1f1f;"><span class="p" id="t103" style="transform:scaleX(0.9240);">Sep </span><span class="p" id="t104" style="transform:scaleX(1.0229);margin-left:-1.49px;">25, </span><span class="p" id="t105" style="letter-spacing:0.400px;margin-left:-0.11px;">2025 </span><span class="p" id="t106" style="letter-spacing:0.312px;margin-left:0.11px;">09:39 </span><span class="p" id="t107" style="transform:scaleX(1.0574);margin-left:0.15px;">AM</span></span>
<span class="t" id="t108" style="left:957.72px;top:597.96px;font-size:18px;font-weight:400;color:#1f1f1f;letter-spacing:0.125px;">Email</span>
<span class="t" id="t109" style="left:1217.39px;top:597.96px;font-size:18px;font-weight:400;color:#1f1f1f;transform:scaleX(0.9847);">Sent</span>
<span class="t" style="left:1433.47px;top:597.96px;font-size:18px;font-weight:400;color:#1f1f1f;"><span class="p" id="t110" style="transform:scaleX(1.0733);">Dr. </span><span class="p" id="t111" style="letter-spacing:0.250px;margin-left:0.85px;">David </span><span class="p" id="t112" style="letter-spacing:0.287px;margin-left:-0.61px;">Smith</span></span>
<span class="t" id="t113" style="left:159.60px;top:648.96px;font-size:18px;font-weight:400;color:#1487d2;transform:scaleX(0.9893);">De Leon,Carmen</span>
<span class="t" id="t114" style="left:440.62px;top:648.96px;font-size:18px;font-weight:400;color:#1f1f1f;letter-spacing:0.286px;">Cha10205</span>
<span class="t" style="left:655.68px;top:648.96px;font-size:18px;font-weight:400;color:#1f1f1f;"><span class="p" id="t115" style="transform:scaleX(0.9240);">Sep </span><span class="p" id="t116" style="transform:scaleX(1.0229);margin-left:-1.49px;">25, </span><span class="p" id="t117" style="letter-spacing:0.400px;margin-left:-0.11px;">2025 </span><span class="p" id="t118" style="letter-spacing:0.312px;margin-left:0.11px;">09:39 </span><span class="p" id="t119" style="transform:scaleX(1.0574);margin-left:0.15px;">AM</span></span>
<span class="t" id="t120" style="left:957.72px;top:648.96px;font-size:18px;font-weight:400;color:#1f1f1f;letter-spacing:0.125px;">Email</span>
<span class="t" id="t121" style="left:1217.39px;top:648.96px;font-size:18px;font-weight:400;color:#1f1f1f;transform:scaleX(0.9847);">Sent</span>
<span class="t" style="left:1433.47px;top:648.96px;font-size:18px;font-weight:400;color:#1f1f1f;"><span class="p" id="t122" style="transform:scaleX(1.0733);">Dr. </span><span class="p" id="t123" style="letter-spacing:0.250px;margin-left:0.85px;">David </span><span class="p" id="t124" style="letter-spacing:0.287px;margin-left:-0.61px;">Smith</span></span>
<span class="t" id="t125" style="left:159.60px;top:699.96px;font-size:18px;font-weight:400;color:#1487d2;transform:scaleX(0.9610);">WAYNE,BRUCE</span>
<span class="t" id="t126" style="left:440.15px;top:699.96px;font-size:18px;font-weight:400;color:#1f1f1f;transform:scaleX(1.0673);">10102</span>
<span class="t" style="left:655.68px;top:699.96px;font-size:18px;font-weight:400;color:#1f1f1f;"><span class="p" id="t127" style="transform:scaleX(0.9240);">Sep </span><span class="p" id="t128" style="transform:scaleX(1.0229);margin-left:-1.49px;">25, </span><span class="p" id="t129" style="letter-spacing:0.400px;margin-left:-0.11px;">2025 </span><span class="p" id="t130" style="letter-spacing:0.312px;margin-left:0.11px;">09:39 </span><span class="p" id="t131" style="transform:scaleX(1.0574);margin-left:0.15px;">AM</span></span>
<span class="t" id="t132" style="left:957.72px;top:699.96px;font-size:18px;font-weight:400;color:#1f1f1f;transform:scaleX(0.9779);">PHR</span>
<span class="t" id="t133" style="left:1217.39px;top:699.96px;font-size:18px;font-weight:400;color:#1f1f1f;transform:scaleX(0.9847);">Sent</span>
<span class="t" style="left:1433.47px;top:699.96px;font-size:18px;font-weight:400;color:#1f1f1f;"><span class="p" id="t134" style="transform:scaleX(1.0733);">Dr. </span><span class="p" id="t135" style="letter-spacing:0.250px;margin-left:0.85px;">David </span><span class="p" id="t136" style="letter-spacing:0.287px;margin-left:-0.61px;">Smith</span></span>
<span class="t" id="t137" style="left:159.60px;top:750.96px;font-size:18px;font-weight:400;color:#1487d2;transform:scaleX(0.9758);">Shelake,Akash</span>
<span class="t" id="t138" style="left:440.62px;top:750.96px;font-size:18px;font-weight:400;color:#1f1f1f;letter-spacing:0.407px;">Jun16553</span>
<span class="t" style="left:655.68px;top:750.96px;font-size:18px;font-weight:400;color:#1f1f1f;"><span class="p" id="t139" style="transform:scaleX(0.9240);">Sep </span><span class="p" id="t140" style="transform:scaleX(1.0229);margin-left:-1.49px;">25, </span><span class="p" id="t141" style="letter-spacing:0.400px;margin-left:-0.11px;">2025 </span><span class="p" id="t142" style="letter-spacing:0.312px;margin-left:0.11px;">09:39 </span><span class="p" id="t143" style="transform:scaleX(1.0574);margin-left:0.15px;">AM</span></span>
<span class="t" id="t144" style="left:957.72px;top:750.96px;font-size:18px;font-weight:400;color:#1f1f1f;transform:scaleX(0.9779);">PHR</span>
<span class="t" id="t145" style="left:1217.39px;top:750.96px;font-size:18px;font-weight:400;color:#1f1f1f;transform:scaleX(0.9847);">Sent</span>
<span class="t" style="left:1433.47px;top:750.96px;font-size:18px;font-weight:400;color:#1f1f1f;"><span class="p" id="t146" style="transform:scaleX(1.0733);">Dr. </span><span class="p" id="t147" style="letter-spacing:0.250px;margin-left:0.85px;">David </span><span class="p" id="t148" style="letter-spacing:0.287px;margin-left:-0.61px;">Smith</span></span>
<span class="t" id="t149" style="left:159.60px;top:801.96px;font-size:18px;font-weight:400;color:#1487d2;letter-spacing:0.188px;">williams,David</span>
<span class="t" id="t150" style="left:440.62px;top:801.96px;font-size:18px;font-weight:400;color:#1f1f1f;letter-spacing:0.080px;">Cha014</span>
<span class="t" style="left:655.68px;top:801.96px;font-size:18px;font-weight:400;color:#1f1f1f;"><span class="p" id="t151" style="transform:scaleX(0.9240);">Sep </span><span class="p" id="t152" style="transform:scaleX(1.0229);margin-left:-1.49px;">25, </span><span class="p" id="t153" style="letter-spacing:0.400px;margin-left:-0.11px;">2025 </span><span class="p" id="t154" style="letter-spacing:0.312px;margin-left:0.11px;">09:39 </span><span class="p" id="t155" style="transform:scaleX(1.0574);margin-left:0.15px;">AM</span></span>
<span class="t" id="t156" style="left:957.72px;top:801.96px;font-size:18px;font-weight:400;color:#1f1f1f;letter-spacing:0.125px;">Email</span>
<span class="t" id="t157" style="left:1217.39px;top:801.96px;font-size:18px;font-weight:400;color:#1f1f1f;transform:scaleX(0.9847);">Sent</span>
<span class="t" style="left:1433.47px;top:801.96px;font-size:18px;font-weight:400;color:#1f1f1f;"><span class="p" id="t158" style="transform:scaleX(1.0733);">Dr. </span><span class="p" id="t159" style="letter-spacing:0.250px;margin-left:0.85px;">David </span><span class="p" id="t160" style="letter-spacing:0.287px;margin-left:-0.61px;">Smith</span></span>
<span class="t" id="t161" style="left:159.60px;top:852.96px;font-size:18px;font-weight:400;color:#1487d2;transform:scaleX(0.9688);">Sew, Paul</span>
<span class="t" id="t162" style="left:440.62px;top:852.96px;font-size:18px;font-weight:400;color:#1f1f1f;letter-spacing:0.314px;">Cha10373</span>
<span class="t" style="left:655.68px;top:852.96px;font-size:18px;font-weight:400;color:#1f1f1f;"><span class="p" id="t163" style="transform:scaleX(0.9240);">Sep </span><span class="p" id="t164" style="transform:scaleX(1.0229);margin-left:-1.49px;">25, </span><span class="p" id="t165" style="letter-spacing:0.400px;margin-left:-0.11px;">2025 </span><span class="p" id="t166" style="letter-spacing:0.312px;margin-left:0.11px;">09:39 </span><span class="p" id="t167" style="transform:scaleX(1.0574);margin-left:0.15px;">AM</span></span>
<span class="t" id="t168" style="left:957.72px;top:852.96px;font-size:18px;font-weight:400;color:#1f1f1f;letter-spacing:0.125px;">Email</span>
<span class="t" id="t169" style="left:1217.39px;top:852.96px;font-size:18px;font-weight:400;color:#1f1f1f;transform:scaleX(0.9847);">Sent</span>
<span class="t" style="left:1433.47px;top:852.96px;font-size:18px;font-weight:400;color:#1f1f1f;"><span class="p" id="t170" style="transform:scaleX(1.0733);">Dr. </span><span class="p" id="t171" style="letter-spacing:0.250px;margin-left:0.85px;">David </span><span class="p" id="t172" style="letter-spacing:0.287px;margin-left:-0.61px;">Smith</span></span>
<span class="t" id="t173" style="left:159.60px;top:903.96px;font-size:18px;font-weight:400;color:#1487d2;letter-spacing:0.350px;">Hemsworth,Chris</span>
<span class="t" id="t174" style="left:440.62px;top:903.96px;font-size:18px;font-weight:400;color:#1f1f1f;letter-spacing:0.407px;">Jun16628</span>
<span class="t" style="left:655.68px;top:903.96px;font-size:18px;font-weight:400;color:#1f1f1f;"><span class="p" id="t175" style="transform:scaleX(0.9240);">Sep </span><span class="p" id="t176" style="transform:scaleX(1.0229);margin-left:-1.49px;">25, </span><span class="p" id="t177" style="letter-spacing:0.400px;margin-left:-0.11px;">2025 </span><span class="p" id="t178" style="letter-spacing:0.312px;margin-left:0.11px;">09:39 </span><span class="p" id="t179" style="transform:scaleX(1.0574);margin-left:0.15px;">AM</span></span>
<span class="t" id="t180" style="left:957.72px;top:903.96px;font-size:18px;font-weight:400;color:#1f1f1f;transform:scaleX(0.9779);">PHR</span>
<span class="t" id="t181" style="left:1217.39px;top:903.96px;font-size:18px;font-weight:400;color:#1f1f1f;transform:scaleX(0.9847);">Sent</span>
<span class="t" style="left:1433.47px;top:903.96px;font-size:18px;font-weight:400;color:#1f1f1f;"><span class="p" id="t182" style="transform:scaleX(1.0733);">Dr. </span><span class="p" id="t183" style="letter-spacing:0.250px;margin-left:0.85px;">David </span><span class="p" id="t184" style="letter-spacing:0.287px;margin-left:-0.61px;">Smith</span></span>
<span class="t" id="t185" style="left:159.60px;top:954.96px;font-size:18px;font-weight:400;color:#1487d2;letter-spacing:0.167px;">Dobranski,Carmen</span>
<span class="t" id="t186" style="left:440.62px;top:954.96px;font-size:18px;font-weight:400;color:#1f1f1f;letter-spacing:0.308px;">CK 0132</span>
<span class="t" style="left:655.68px;top:954.96px;font-size:18px;font-weight:400;color:#1f1f1f;"><span class="p" id="t187" style="transform:scaleX(0.9240);">Sep </span><span class="p" id="t188" style="transform:scaleX(1.0229);margin-left:-1.49px;">25, </span><span class="p" id="t189" style="letter-spacing:0.400px;margin-left:-0.11px;">2025 </span><span class="p" id="t190" style="letter-spacing:0.312px;margin-left:0.11px;">09:39 </span><span class="p" id="t191" style="transform:scaleX(1.0574);margin-left:0.15px;">AM</span></span>
<span class="t" id="t192" style="left:957.72px;top:954.96px;font-size:18px;font-weight:400;color:#1f1f1f;letter-spacing:0.125px;">Email</span>
<span class="t" id="t193" style="left:1217.39px;top:954.96px;font-size:18px;font-weight:400;color:#1f1f1f;transform:scaleX(0.9847);">Sent</span>
<span class="t" style="left:1433.47px;top:954.96px;font-size:18px;font-weight:400;color:#1f1f1f;"><span class="p" id="t194" style="transform:scaleX(1.0733);">Dr. </span><span class="p" id="t195" style="letter-spacing:0.250px;margin-left:0.85px;">David </span><span class="p" id="t196" style="letter-spacing:0.287px;margin-left:-0.61px;">Smith</span></span>
<span class="t" id="t197" style="left:23.64px;top:108.79px;font-size:15.6px;font-weight:400;color:#dfdfe3;transform:scaleX(1.0936);-webkit-text-stroke:0.45px #dfdfe3;">Patients</span>
<span class="t" id="t198" style="left:18.30px;top:199.79px;font-size:15.6px;font-weight:400;color:#dfdfe3;letter-spacing:0.236px;-webkit-text-stroke:0.45px #dfdfe3;">Messages</span>
<span class="t" id="t199" style="left:21.00px;top:289.69px;font-size:15.6px;font-weight:400;color:#dfdfe3;transform:scaleX(1.0580);-webkit-text-stroke:0.45px #dfdfe3;">Calendar</span>
<span class="t" id="t200" style="left:35.50px;top:378.79px;font-size:15.6px;font-weight:400;color:#dfdfe3;transform:scaleX(0.9874);-webkit-text-stroke:0.45px #dfdfe3;">Tasks</span>
<span class="t" id="t201" style="left:9.30px;top:469.49px;font-size:15.6px;font-weight:400;color:#dfdfe3;transform:scaleX(1.1055);-webkit-text-stroke:0.45px #dfdfe3;">Chart Notes</span>
<span class="t" id="t202" style="left:28.30px;top:559.09px;font-size:15.6px;font-weight:400;color:#dfdfe3;letter-spacing:0.340px;-webkit-text-stroke:0.45px #dfdfe3;">Images</span>
<span class="t" id="t203" style="left:17.70px;top:648.79px;font-size:15.6px;font-weight:400;color:#dfdfe3;transform:scaleX(1.1373);-webkit-text-stroke:0.45px #dfdfe3;">Inventory</span>
<span class="t" id="t204" style="left:30.83px;top:739.49px;font-size:15.6px;font-weight:400;color:#fff;transform:scaleX(1.1650);-webkit-text-stroke:0.45px #fff;">Billing</span>
<span class="t" id="t205" style="left:4.58px;top:829.09px;font-size:15.6px;font-weight:400;color:#dfdfe3;transform:scaleX(1.1123);-webkit-text-stroke:0.45px #dfdfe3;">Prescriptions</span>
<span class="t" id="t206" style="left:33.81px;top:911.29px;font-size:15.6px;font-weight:400;color:#dfdfe3;transform:scaleX(1.1647);-webkit-text-stroke:0.45px #dfdfe3;">More</span>
<span class="t" id="t207" style="left:243.50px;top:20.86px;font-size:16px;font-weight:400;color:#a3a3a3;transform:scaleX(0.9922);">Search Patient by Name / ID</span>
<span class="t" id="t208" style="left:1501.30px;top:20.07px;font-size:20px;font-weight:400;color:#1c1c1c;letter-spacing:0.298px;">Charm Wellness - Prime</span>
<span class="t" id="t209" style="left:38.30px;top:14.11px;font-size:25.5px;font-weight:700;color:#9c1068;transform:scaleX(1.0447);-webkit-text-stroke:0.9px #9c1068;">charm</span>
<span class="t" id="t210" style="left:118.64px;top:14.54px;font-size:25px;font-weight:400;color:#ffa312;letter-spacing:2.087px;-webkit-text-stroke:0.8px #ffa312;transform:scaleX(0.86);transform-origin:0 0;">EHR</span>
<span class="t" id="t211" style="left:337.42px;top:1006.76px;font-size:16px;font-weight:400;color:#a9a9a9;transform:scaleX(0.9849);">Here is your Smart Chat (Ctrl+Space)</span>
<span class="t" id="t212" style="left:36.50px;top:1020.41px;font-size:10.5px;font-weight:400;color:#908c94;transform:scaleX(0.9748);">Chats</span>
<span class="t" id="t213" style="left:139.70px;top:1020.41px;font-size:10.5px;font-weight:400;color:#908c94;transform:scaleX(0.9819);">Channels</span>
<span class="t" id="t214" style="left:251.60px;top:1020.41px;font-size:10.5px;font-weight:400;color:#908c94;letter-spacing:0.229px;">Contacts</span>
</div></div></body></html>
